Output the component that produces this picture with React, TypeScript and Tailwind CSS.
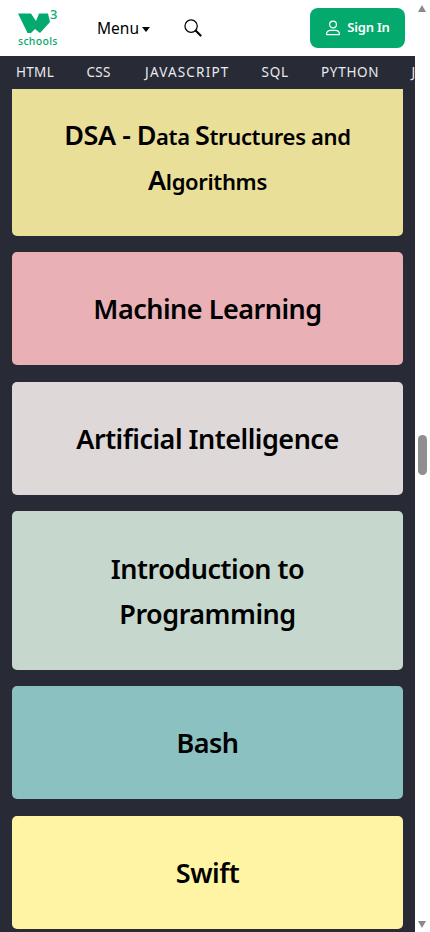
const navItems = [
  { label: "HTML", className: "w-[39px] tracking-[0.3px]" },
  { label: "CSS", className: "w-[27px] tracking-[0.3px]" },
  { label: "JAVASCRIPT", className: "w-[85px] tracking-[1.2px]" },
  { label: "SQL", className: "w-[28px] tracking-[0.8px]" },
  { label: "PYTHON", className: "w-[59px] tracking-[0.7px]" },
  { label: "JAVA", className: "w-[40px] tracking-[0.7px]" },
];

const cards = [
  { title: "Machine Learning", color: "bg-[#e9b0b6]" },
  { title: "Artificial Intelligence", color: "bg-[#dfd8d9]" },
  { title: "Introduction to Programming", color: "bg-[#c6d8cd]", narrow: true },
  { title: "Bash", color: "bg-[#8bc1c1]" },
  { title: "Swift", color: "bg-[#fff4a3]" },
];

const Logo = () => (
  <div className="flex w-[40px] flex-col">
    <svg width="40" height="27" viewBox="0 0 40 27" className="overflow-visible">
      <path d="M0 4.5 L13 4.5 L18 12 L21 4.5 L30 4.5 L32 13 L22 24 L17 20 L13 24 L9.5 24 Z" fill="#04aa6d" />
      <text x="32" y="10" fontSize="13" fontWeight="500" fontFamily="'Noto Sans', sans-serif" fill="#04aa6d">3</text>
    </svg>
    <span className="whitespace-nowrap text-[10.5px] font-medium leading-[11px] tracking-[0.3px] text-[#04aa6d]">schools</span>
  </div>
);

const SearchIcon = () => (
  <svg width="18" height="18" viewBox="0 0 19 19" fill="none" className="ml-[34px]">
    <circle cx="7.5" cy="7.5" r="6.5" stroke="black" strokeWidth="1.3" />
    <path d="M12.5 12.5 L17.5 17.5" stroke="black" strokeWidth="2.2" strokeLinecap="round" />
  </svg>
);

const PersonIcon = () => (
  <svg width="16" height="16" viewBox="0 0 16 16" fill="none" stroke="white" strokeWidth="1.2">
    <circle cx="8" cy="4.5" r="3.4" />
    <path d="M1.5 14.6 C1.5 11.5 3.5 10.3 5.5 10.3 L10.5 10.3 C12.5 10.3 14.5 11.5 14.5 14.6 Z" strokeLinejoin="round" />
  </svg>
);

const Header = () => (
  <header className="flex h-[56px] items-center bg-white pl-[18px] pr-[10px]">
    <Logo />
    <div className="ml-[39px] mt-[2px] flex items-center gap-[3px] text-[15.5px] text-black">
      Menu
      <span className="mt-[1px] h-0 w-0 border-x-[4.5px] border-t-[5px] border-x-transparent border-t-black" />
    </div>
    <SearchIcon />
    <button className="ml-auto flex h-[40px] w-[95px] items-center justify-center gap-[6px] rounded-[8px] bg-[#04aa6d] text-[13px] font-semibold tracking-[-0.2px] text-white">
      <PersonIcon />
      Sign In
    </button>
  </header>
);

const Nav = () => (
  <nav className="flex h-[33px] items-center gap-[31.5px] overflow-hidden whitespace-nowrap bg-[#282a35] pl-[16px] text-[13.5px] text-[#e8eaf0]">
    {navItems.map((item) => (
      <span key={item.label} className={`shrink-0 ${item.className}`}>
        {item.label}
      </span>
    ))}
  </nav>
);

const Card = ({ children, color, className = "" }: { children: React.ReactNode; color: string; className?: string }) => (
  <div className={`rounded-[5px] px-[34px] py-[34.1px] text-center text-[27px] font-semibold leading-[45px] tracking-[-0.5px] text-black ${color} ${className}`}>
    {children}
  </div>
);

const Scrollbar = () => (
  <div className="relative h-full w-[15px] bg-white">
    <div className="absolute left-[3px] top-[5px] h-0 w-0 border-x-[4.5px] border-b-[7px] border-x-transparent border-b-[#8a8a8a]" />
    <div className="absolute left-[3px] top-[435px] h-[40px] w-[9px] rounded-[5px] bg-[#8f8f8f]" />
    <div className="absolute bottom-[4px] left-[3px] h-0 w-0 border-x-[4.5px] border-t-[7px] border-x-transparent border-t-[#8a8a8a]" />
  </div>
);

export default function App() {
  return (
    <div className="flex h-[932px] w-[430px] overflow-hidden font-['Noto_Sans',sans-serif]">
      <div className="flex w-[415px] flex-col">
        <Header />
        <Nav />
        <main className="flex flex-1 flex-col gap-[16.5px] overflow-hidden bg-[#282a35] px-[12px]">
          <Card color="bg-[#e9df98]" className="-mt-[11.6px] !px-[10px]">
            DSA - D<span className="text-[22px] leading-none tracking-[-0.35px]">ata </span>S<span className="text-[22px] leading-none tracking-[-0.35px]">tructures and </span>A<span className="text-[22px] leading-none tracking-[-0.35px]">lgorithms</span>
          </Card>
          {cards.map((card) => (
            <Card key={card.title} color={card.color} className={card.narrow ? "!px-[60px]" : ""}>
              {card.title}
            </Card>
          ))}
        </main>
      </div>
      <Scrollbar />
    </div>
  );
}
